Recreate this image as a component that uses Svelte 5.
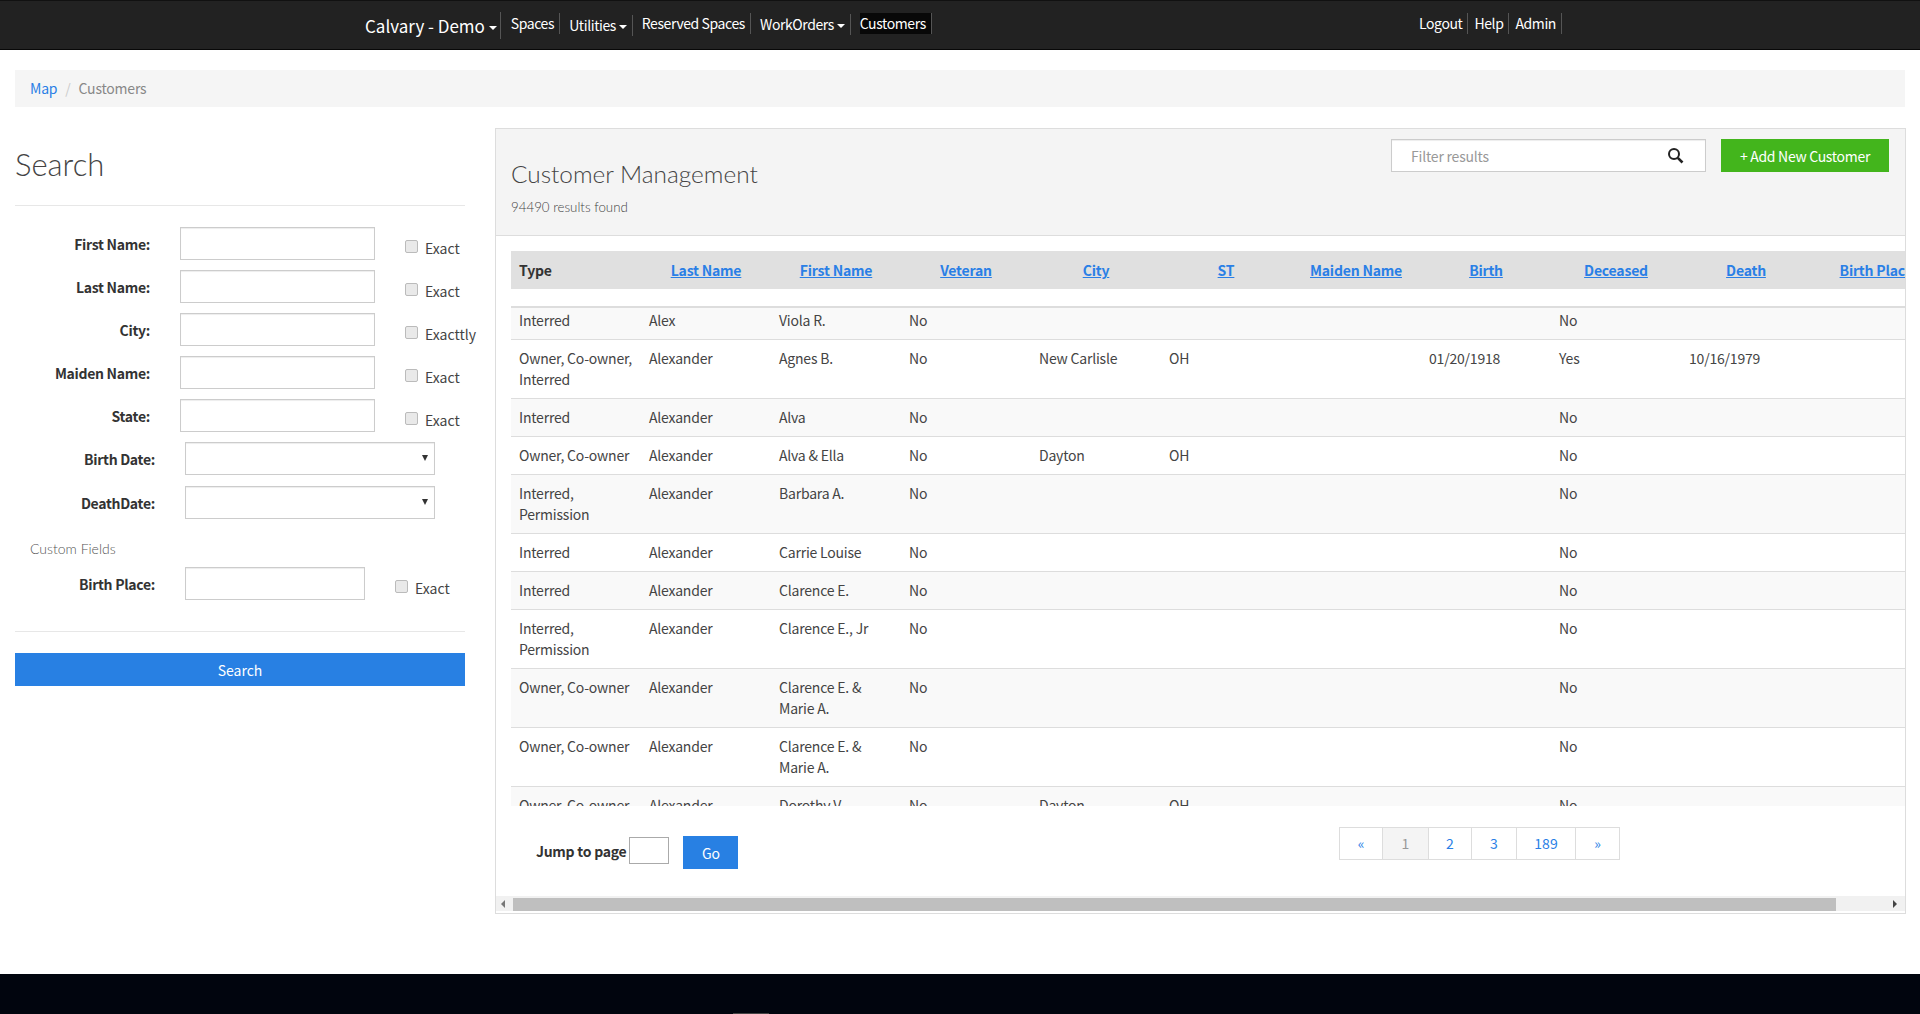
<script>
  const labels = ['Last Name', 'First Name', 'Veteran', 'City', 'ST', 'Maiden Name', 'Birth', 'Deceased', 'Death', 'Birth Place'];

  const rows = [
    ['Interred', 'Alex', 'Viola R.', 'No', '', '', '', '', 'No', '', ''],
    ['Owner, Co-owner, Interred', 'Alexander', 'Agnes B.', 'No', 'New Carlisle', 'OH', '', '01/20/1918', 'Yes', '10/16/1979', ''],
    ['Interred', 'Alexander', 'Alva', 'No', '', '', '', '', 'No', '', ''],
    ['Owner, Co-owner', 'Alexander', 'Alva & Ella', 'No', 'Dayton', 'OH', '', '', 'No', '', ''],
    ['Interred, Permission', 'Alexander', 'Barbara A.', 'No', '', '', '', '', 'No', '', ''],
    ['Interred', 'Alexander', 'Carrie Louise', 'No', '', '', '', '', 'No', '', ''],
    ['Interred', 'Alexander', 'Clarence E.', 'No', '', '', '', '', 'No', '', ''],
    ['Interred, Permission', 'Alexander', 'Clarence E., Jr', 'No', '', '', '', '', 'No', '', ''],
    ['Owner, Co-owner', 'Alexander', 'Clarence E. & Marie A.', 'No', '', '', '', '', 'No', '', ''],
    ['Owner, Co-owner', 'Alexander', 'Clarence E. & Marie A.', 'No', '', '', '', '', 'No', '', ''],
    ['Owner, Co-owner', 'Alexander', 'Dorothy V.', 'No', 'Dayton', 'OH', '', '', 'No', '', '']
  ];

  const topFields = [
    { label: 'First Name:', check: 'Exact' },
    { label: 'Last Name:', check: 'Exact' },
    { label: 'City:', check: 'Exacttly' },
    { label: 'Maiden Name:', check: 'Exact' },
    { label: 'State:', check: 'Exact' }
  ];
</script>

<nav class="navbar">
  <div class="nav-left">
    <a class="brand sep">Calvary - Demo <i class="caret"></i></a>
    <a class="item sep">Spaces</a>
    <a class="item sep low">Utilities <i class="caret"></i></a>
    <a class="item sep">Reserved Spaces</a>
    <a class="item sep low1">WorkOrders <i class="caret"></i></a>
    <a class="item sep active">Customers</a>
  </div>
  <div class="nav-right">
    <a class="item sep">Logout</a>
    <a class="item sep">Help</a>
    <a class="item sep">Admin</a>
  </div>
</nav>

<div class="breadcrumb">
  <a href="#map">Map</a>
  <span class="slash">/</span>
  <span class="current">Customers</span>
</div>

<main class="content">
  <aside class="search">
    <h2>Search</h2>
    <hr />
    <form class="fields">
      {#each topFields as f}
        <div class="field">
          <label>{f.label}</label>
          <input type="text" />
          <span class="exact"><input type="checkbox" />{f.check}</span>
        </div>
      {/each}
      <div class="field wide">
        <label>Birth Date:</label>
        <div class="select"><select></select><i></i></div>
      </div>
      <div class="field wide second">
        <label>DeathDate:</label>
        <div class="select"><select></select><i></i></div>
      </div>
      <div class="custom">Custom Fields</div>
      <div class="field wide place">
        <label>Birth Place:</label>
        <input type="text" />
        <span class="exact"><input type="checkbox" />Exact</span>
      </div>
    </form>
    <hr class="bottom" />
    <button class="btn-blue search-btn" type="button">Search</button>
  </aside>

  <section class="panel">
    <header class="panel-head">
      <div class="titles">
        <h3>Customer Management</h3>
        <p>94490 results found</p>
      </div>
      <div class="tools">
        <div class="filter">
          <input type="text" placeholder="Filter results" />
          <svg width="17" height="17" viewBox="0 0 17 17" fill="none" stroke="#222">
            <circle cx="7" cy="7" r="5" stroke-width="2" />
            <path d="M10.8 10.8 15.5 15.5" stroke-width="2.6" />
          </svg>
        </div>
        <button class="btn-green" type="button">+ Add New Customer</button>
      </div>
    </header>

    <div class="table-wrap">
      <table>
        <thead>
          <tr>
            <th class="type">Type</th>
            {#each labels as l}
              <th><a href="#sort">{l}</a></th>
            {/each}
          </tr>
          <tr class="spacer"><th colspan="11"></th></tr>
        </thead>
        <tbody>
          {#each rows as row}
            <tr>
              {#each row as cell}
                <td>{cell}</td>
              {/each}
            </tr>
          {/each}
        </tbody>
      </table>
    </div>

    <div class="pager-row">
      <div class="jump">
        <b>Jump to page</b>
        <input type="text" />
        <button class="btn-blue go" type="button">Go</button>
      </div>
      <ul class="pagination">
        <li><a href="#p">«</a></li>
        <li class="on"><a href="#p">1</a></li>
        <li><a href="#p">2</a></li>
        <li><a href="#p">3</a></li>
        <li><a href="#p">189</a></li>
        <li><a href="#p">»</a></li>
      </ul>
    </div>

    <div class="hscroll">
      <i class="arrow left"></i>
      <div class="thumb"></div>
      <i class="arrow right"></i>
    </div>
  </section>
</main>

<footer class="footer"><span></span></footer>

<style>
  :global(body) {
    margin: 0;
    background: #fff;
    overflow: hidden;
    font-family: "Noto Sans CJK SC", "Noto Sans", sans-serif;
    font-size: 14px;
    line-height: 1.42857;
    color: #333;
  }

  a {
    text-decoration: none;
    color: #2a7fe6;
  }

  .navbar {
    display: flex;
    box-sizing: border-box;
    height: 50px;
    background: #222;
    border-top: 1px solid #111;
    border-bottom: 1px solid #080808;
    padding-left: 365px;
  }

  .nav-left {
    display: flex;
    align-items: flex-start;
    width: 1054px;
  }

  .nav-right {
    display: flex;
    align-items: flex-start;
  }

  .nav-left a,
  .nav-right a {
    color: #fff;
    white-space: nowrap;
  }

  .sep {
    border-right: 1px solid #555;
  }

  .brand {
    font-size: 17px;
    line-height: 27px;
    margin-top: 11px;
    padding-right: 3px;
    margin-right: 10px;
  }

  .item {
    font-size: 14px;
    letter-spacing: -0.4px;
    line-height: 21px;
    margin-top: 12px;
    padding-right: 5px;
    margin-right: 9px;
  }

  .nav-right .item {
    margin-right: 6px;
  }

  .low {
    margin-top: 14px;
  }

  .low1 {
    margin-top: 13px;
  }

  .active {
    background: #080808;
  }

  .caret {
    display: inline-block;
    width: 0;
    height: 0;
    vertical-align: middle;
    border-top: 4px solid #fff;
    border-left: 4px solid transparent;
    border-right: 4px solid transparent;
  }

  .breadcrumb {
    box-sizing: border-box;
    height: 37px;
    margin: 20px 15px 0;
    padding: 8px 15px;
    background: #f5f5f5;
    color: #999;
    font-size: 14px;
    letter-spacing: -0.2px;
    line-height: 21px;
  }

  .slash {
    color: #ccc;
    padding: 0 5px;
  }

  .current {
    color: #888;
  }

  .content {
    display: flex;
    gap: 30px;
    padding: 21px 14px 0 15px;
  }

  .search {
    width: 450px;
    flex: none;
  }

  .search h2 {
    margin: 19px 0 0;
    font-family: Lato, sans-serif;
    font-size: 31px;
    font-weight: 300;
    line-height: 34px;
    color: #444;
  }

  hr {
    border: 0;
    height: 1px;
    background: #e7e7e7;
    margin: 24px 0 0;
  }

  hr.bottom {
    margin-top: 31px;
  }

  .fields {
    padding-top: 21px;
  }

  .field {
    display: flex;
    align-items: flex-start;
    height: 33px;
    margin-bottom: 10px;
  }

  .field label {
    width: 135px;
    flex: none;
    text-align: right;
    font-weight: 700;
    font-size: 14px;
    letter-spacing: -0.3px;
    line-height: 35px;
    margin-right: 30px;
    color: #333;
  }

  .field > input[type='text'] {
    box-sizing: border-box;
    flex: none;
    width: 195px;
    height: 33px;
    border: 1px solid #ccc;
    background: #fff;
    box-shadow: inset 0 1px 1px rgba(0, 0, 0, 0.075);
    padding: 0;
  }

  .exact {
    display: flex;
    align-items: center;
    margin: 5px 0 0 30px;
    height: 32px;
    white-space: nowrap;
    color: #444;
    font-size: 14px;
  }

  .exact input {
    appearance: none;
    box-sizing: border-box;
    width: 13px;
    height: 13px;
    margin: 0 7px 3px 0;
    background: #e9e9e9;
    border: 1px solid #bbb;
    border-radius: 2px;
  }

  .wide label {
    width: 140px;
  }

  .wide > input[type='text'] {
    width: 180px;
  }

  .second {
    margin-top: 11px;
  }

  .select {
    position: relative;
    width: 250px;
    height: 33px;
  }

  .select select {
    appearance: none;
    box-sizing: border-box;
    display: block;
    width: 100%;
    height: 33px;
    background: #fff;
    border: 1px solid #ccc;
    border-radius: 0;
    box-shadow: inset 0 1px 1px rgba(0, 0, 0, 0.075);
  }

  .select i {
    position: absolute;
    right: 7px;
    top: 13px;
    border-top: 6px solid #333;
    border-left: 3px solid transparent;
    border-right: 3px solid transparent;
  }

  .custom {
    margin: 20px 0 0 15px;
    font-family: Lato, sans-serif;
    font-size: 14px;
    line-height: 20px;
    font-weight: 300;
    color: #555;
  }

  .place {
    margin-top: 8px;
    margin-bottom: 0;
  }

  .btn-blue {
    border: 0;
    background: #2880e3;
    color: #fff;
    font: inherit;
    font-size: 14px;
    cursor: pointer;
  }

  .search-btn {
    display: block;
    width: 100%;
    height: 33px;
    margin-top: 21px;
  }

  .panel {
    flex: 1;
    min-width: 0;
    box-sizing: border-box;
    height: 786px;
    border: 1px solid #ddd;
    overflow: hidden;
  }

  .panel-head {
    display: flex;
    justify-content: space-between;
    box-sizing: border-box;
    height: 107px;
    background: #f4f4f4;
    border-bottom: 1px solid #ddd;
    padding: 10px 16px 0 15px;
  }

  .titles h3 {
    margin: 19px 0 0;
    font-family: Lato, sans-serif;
    font-size: 24.4px;
    font-weight: 300;
    line-height: 32px;
    color: #444;
  }

  .titles p {
    margin: 7px 0 0;
    font-family: Lato, sans-serif;
    font-size: 13.3px;
    line-height: 20px;
    font-weight: 300;
    color: #444;
  }

  .tools {
    display: flex;
    gap: 15px;
    align-items: flex-start;
  }

  .filter {
    position: relative;
  }

  .filter input {
    display: block;
    box-sizing: border-box;
    width: 315px;
    height: 33px;
    padding: 0 40px 0 19px;
    border: 1px solid #ccc;
    background: #fff;
    font: inherit;
    font-size: 14px;
    letter-spacing: -0.2px;
    box-shadow: inset 0 1px 1px rgba(0, 0, 0, 0.075);
  }

  .filter input::placeholder {
    color: #999;
    opacity: 1;
  }

  .filter svg {
    position: absolute;
    right: 22px;
    top: 8px;
  }

  .btn-green {
    box-sizing: border-box;
    width: 168px;
    height: 33px;
    border: 0;
    background: #43b51c;
    color: #fff;
    font: inherit;
    font-size: 14px;
    letter-spacing: -0.3px;
    cursor: pointer;
  }

  .table-wrap {
    height: 555px;
    margin: 15px 0 0 15px;
    overflow: hidden;
  }

  table {
    table-layout: fixed;
    width: 1430px;
    border-collapse: collapse;
    font-size: 14px;
    letter-spacing: -0.2px;
  }

  thead tr:first-child th {
    height: 38px;
    padding: 0 8px;
    background: #e0e0e0;
    text-align: center;
    font-weight: 700;
    box-sizing: border-box;
  }

  thead a {
    text-decoration: underline;
    white-space: nowrap;
  }

  th.type {
    text-align: left !important;
    color: #333;
  }

  .spacer th {
    height: 17px;
    padding: 0;
    border-bottom: 2px solid #ddd;
  }

  td {
    padding: 8px;
    line-height: 21px;
    border-bottom: 1px solid #ddd;
    vertical-align: top;
    color: #444;
  }

  tbody tr:first-child td {
    padding-top: 2px;
  }

  tbody tr:nth-child(odd) td {
    background: #f9f9f9;
  }

  .pager-row {
    display: flex;
    height: 90px;
  }

  .jump {
    display: flex;
    align-items: flex-start;
    padding: 30px 0 0 40px;
    width: 803px;
    box-sizing: border-box;
  }

  .jump b {
    font-size: 14px;
    letter-spacing: -0.25px;
    line-height: 30px;
    color: #333;
  }

  .jump input {
    box-sizing: border-box;
    width: 40px;
    height: 27px;
    margin: 1px 0 0 3px;
    border: 1px solid #aaa;
    background: #fff;
    padding: 0;
  }

  .go {
    width: 55px;
    height: 33px;
    margin-left: 14px;
  }

  .pagination {
    display: flex;
    list-style: none;
    margin: 21px 0 0 40px;
    padding: 0;
    height: 33px;
    font-size: 14px;
  }

  .pagination li {
    box-sizing: border-box;
    width: 44px;
    margin-right: -1px;
    border: 1px solid #ddd;
    text-align: center;
    line-height: 31px;
  }

  .pagination li:nth-child(4) {
    width: 46px;
  }

  .pagination li:nth-child(5) {
    width: 60px;
  }

  .pagination li:nth-child(6) {
    width: 45px;
  }

  .pagination li.on {
    background: #f4f4f4;
    width: 47px;
  }

  .pagination li.on a {
    color: #999;
  }

  .hscroll {
    display: flex;
    align-items: center;
    height: 15px;
    background: #f1f1f1;
  }

  .thumb {
    width: 1323px;
    height: 13px;
    margin: 2px 0 0 8px;
    background: #bfbfbf;
  }

  .arrow {
    border-top: 4px solid transparent;
    border-bottom: 4px solid transparent;
  }

  .arrow.left {
    margin-left: 5px;
    border-right: 4px solid #777;
  }

  .arrow.right {
    margin-left: 57px;
    border-left: 4px solid #444;
  }

  .footer {
    position: absolute;
    left: 0;
    right: 0;
    top: 974px;
    height: 40px;
    background: #01050e;
  }

  .footer span {
    position: absolute;
    left: 733px;
    bottom: 0;
    width: 36px;
    height: 1px;
    background: #444;
  }
</style>
